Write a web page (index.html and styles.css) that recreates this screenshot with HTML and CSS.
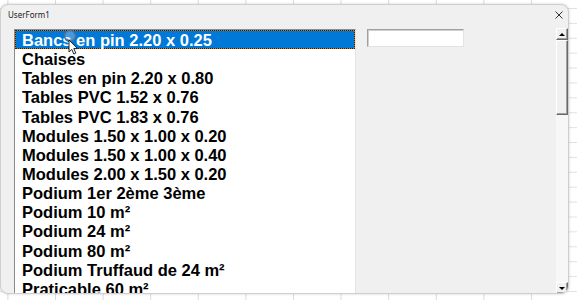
FILE: index.html
```html
<!DOCTYPE html>
<html lang="fr">
<head>
<meta charset="utf-8">
<title>UserForm1</title>
<link rel="stylesheet" href="styles.css">
</head>
<body>
<div class="window">
  <div class="titlebar">
    <span class="title">UserForm1</span>
    <svg class="close" width="8" height="8" viewBox="0 0 8 8"><path d="M0.5 0.5 L7.5 7.5 M7.5 0.5 L0.5 7.5" stroke="#333" stroke-width="1" fill="none"/></svg>
  </div>
  <div class="client">
    <div class="listbox">
      <div class="sel"><div class="item selected">Bancs en pin 2.20 x 0.25</div></div>
      <div class="item">Chaises</div>
      <div class="item">Tables en pin 2.20 x 0.80</div>
      <div class="item">Tables PVC 1.52 x 0.76</div>
      <div class="item">Tables PVC 1.83 x 0.76</div>
      <div class="item">Modules 1.50 x 1.00 x 0.20</div>
      <div class="item">Modules 1.50 x 1.00 x 0.40</div>
      <div class="item">Modules 2.00 x 1.50 x 0.20</div>
      <div class="item">Podium 1er 2ème 3ème</div>
      <div class="item">Podium 10 m²</div>
      <div class="item">Podium 24 m²</div>
      <div class="item">Podium 80 m²</div>
      <div class="item">Podium Truffaud de 24 m²</div>
      <div class="item">Praticable 60 m²</div>
    </div>
    <div class="textbox"></div>
    <div class="spacer"></div>
    <div class="scrollbar">
      <div class="sbtn"><span class="tri up"></span></div>
      <div class="thumb"></div>
      <div class="track"></div>
      <div class="sbtn"><span class="tri down"></span></div>
    </div>
  </div>
  <svg class="cursor" width="22" height="30" viewBox="0 0 22 30">
    <circle cx="9" cy="8" r="5.5" fill="rgba(200,215,235,0.35)" stroke="#4a6fa0" stroke-width="1.5"/>
    <path d="M8 12 L8 24 L10.8 21.4 L12.8 26 L14.8 25.1 L12.8 20.6 L16.5 20.6 Z" fill="#fff" stroke="#111" stroke-width="0.9" stroke-linejoin="round"/>
  </svg>
</div>
</body>
</html>
```
FILE: styles.css
```css
html, body {
  margin: 0;
  padding: 0;
}
body {
  width: 577px;
  height: 300px;
  overflow: hidden;
  background-color: #ffffff;
  background-image:
    linear-gradient(to right, #dcdcdc 1px, transparent 1px),
    linear-gradient(to bottom, #e2e2e2 1px, transparent 1px);
  background-size: 47.6px 14.9px;
  background-position: 55px 8px;
  padding-top: 4px;
  box-sizing: border-box;
}
.window {
  position: relative;
  width: 569px;
  height: 290px;
  box-sizing: border-box;
  background: #f0f0f0;
  border: 1px solid #cfcfcf;
  border-radius: 8px;
  overflow: hidden;
  box-shadow: 0 0 3px rgba(0,0,0,0.18);
  display: flex;
  flex-direction: column;
}
.titlebar {
  height: 24px;
  flex: none;
  display: flex;
  justify-content: space-between;
  align-items: flex-start;
  padding: 0 5px 0 7px;
}
.title {
  font-family: "Noto Sans", "Open Sans", sans-serif;
  font-size: 8px;
  line-height: 10px;
  padding-top: 5px;
  color: #1a1a1a;
}
.close {
  margin-top: 6px;
}
.client {
  flex: none;
  display: flex;
  align-items: flex-start;
  padding-left: 13px;
}
.listbox {
  width: 342px;
  height: 300px;
  box-sizing: border-box;
  background: #fff;
  border-top: 1px solid #8a8a8a;
  border-left: 1px solid #8a8a8a;
  border-right: 1px solid #e3e3e3;
  font-family: "Liberation Sans", Arial, sans-serif;
  font-weight: bold;
  font-size: 16.5px;
  color: #000;
}
.item {
  height: 19.15px;
  line-height: 19.15px;
  padding-top: 1px;
  padding-left: 7px;
  white-space: nowrap;
  box-sizing: border-box;
}
.sel {
  background: #b87630;
}
.item.selected {
  background: #0078d7;
  background-clip: padding-box;
  color: #fff;
  border: 1px dotted #2a2018;
  padding-top: 1px;
  padding-left: 6px;
  line-height: 17.15px;
}
.textbox {
  width: 97px;
  height: 18px;
  margin-left: 11px;
  box-sizing: border-box;
  background: #fff;
  border-top: 1px solid #a0a0a0;
  border-left: 1px solid #a0a0a0;
  border-right: 1px solid #e3e3e3;
  border-bottom: 1px solid #e3e3e3;
  box-shadow: inset 1px 1px 0 #cfcfcf;
}
.spacer {
  flex: 1;
}
.scrollbar {
  width: 12px;
  height: 266px;
  margin-top: -1px;
  display: flex;
  flex-direction: column;
  background: #f7f7f7;
}
.sbtn {
  height: 12px;
  flex: none;
  box-sizing: border-box;
  background: #f0f0f0;
  border-top: 1px solid #ffffff;
  border-left: 1px solid #ffffff;
  border-right: 1px solid #696969;
  border-bottom: 1px solid #696969;
  box-shadow: inset -1px -1px 0 #a0a0a0;
  display: flex;
  align-items: center;
  justify-content: center;
}
.tri {
  width: 0;
  height: 0;
  border-left: 3px solid transparent;
  border-right: 3px solid transparent;
}
.tri.up {
  border-bottom: 3px solid #000;
}
.tri.down {
  border-top: 3px solid #000;
}
.thumb {
  height: 75px;
  flex: none;
  box-sizing: border-box;
  background: #f0f0f0;
  border-top: 1px solid #ffffff;
  border-left: 1px solid #ffffff;
  border-right: 1px solid #696969;
  border-bottom: 1px solid #696969;
  box-shadow: inset -1px -1px 0 #a0a0a0;
}
.track {
  flex: 1;
}
.cursor {
  position: absolute;
  left: 60px;
  top: 23px;
}
```
